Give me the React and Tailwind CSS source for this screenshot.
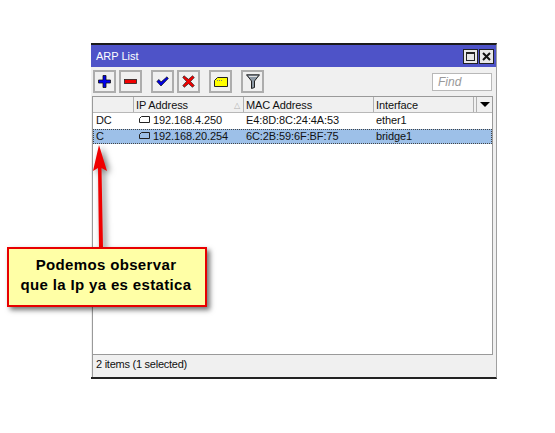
import React from "react";

const Btn = ({ children, className = "" }) => (
  <div className={`w-[23px] h-[23px] flex items-center justify-center bg-[#f0f0f0] border-2 border-[#adadad] ${className}`}>
    {children}
  </div>
);

const Row = ({ a, ip, mac, ifc, selected }) => (
  <div className={`flex h-[15px] items-center text-[11px] leading-[15px] tracking-[-0.1px] mb-px ${selected ? "bg-[#9dc0e8] outline-1 outline-dotted outline-[#444] -outline-offset-1" : "bg-white"}`}>
    <div className="w-[41px] pl-[3px]">{a}</div>
    <div className="w-[110px] pl-[5px] flex items-center gap-[3px]">
      <svg width="11" height="7" viewBox="0 0 11 7" className="-mt-[2px]">
        <path d="M0.5 6.5V2.5L2.5 0.5H10.5V6.5Z" fill="none" stroke="#222" strokeWidth="1" />
      </svg>
      <span>{ip}</span>
    </div>
    <div className="w-[130px] pl-[2px]">{mac}</div>
    <div className="w-[100px] pl-[2px]">{ifc}</div>
  </div>
);

export default function App() {
  return (
    <div className="relative w-[555px] h-[433px] bg-white overflow-hidden pt-[43px] pl-[91px] text-[#111]" style={{ fontFamily: '"Liberation Sans", Arial, sans-serif' }}>
      <div className="w-[406px] h-[336px] flex flex-col bg-[#f0f0f0] border-t-2 border-t-[#1a1a1a] border-b-2 border-b-[#222] border-r border-r-[#a0a0a0]">
        <div className="h-[22px] shrink-0 bg-[#4e53c8] flex items-center justify-between pl-[5px] pr-[2px]">
          <span className="text-[11px] text-white pt-px">ARP List</span>
          <div className="flex gap-px">
            <div className="w-[15px] h-[15px] bg-[#e8e8e8] border border-[#222] flex items-center justify-center">
              <div className="w-[9px] h-[9px] border border-[#222] border-t-2" />
            </div>
            <div className="w-[15px] h-[15px] bg-[#e8e8e8] border border-[#222] flex items-center justify-center">
              <svg width="9" height="9" viewBox="0 0 9 9"><path d="M1 1L8 8M8 1L1 8" stroke="#111" strokeWidth="2" /></svg>
            </div>
          </div>
        </div>

        <div className="h-[29px] shrink-0 flex items-center pl-[2px] pr-[4px]">
          <Btn>
            <svg width="13" height="13" viewBox="0 0 13 13"><path d="M5 0.5H8V5H12.5V8H8V12.5H5V8H0.5V5H5Z" fill="#0000f0" stroke="#111" strokeWidth="0.8" /></svg>
          </Btn>
          <Btn className="ml-[3px]">
            <svg width="13" height="5" viewBox="0 0 13 5"><rect x="0.5" y="0.5" width="12" height="4" fill="#f00000" stroke="#222" strokeWidth="0.8" /></svg>
          </Btn>
          <Btn className="ml-[9px]">
            <svg width="13" height="11" viewBox="0 0 13 11"><path d="M0.8 5.5L3 3.5L5 6L11 0.8L12.3 2.5L5 10Z" fill="#0000e0" stroke="#111" strokeWidth="0.7" /></svg>
          </Btn>
          <Btn className="ml-[3px]">
            <svg width="13" height="13" viewBox="0 0 13 13"><path d="M2 0.8L6.5 4.3L10.5 0.8L12.3 2.5L8.5 6.5L12.3 10.5L10.5 12.3L6.5 8.7L2.3 12.3L0.8 10.5L4.5 6.5L0.8 2.5Z" fill="#f00000" stroke="#222" strokeWidth="0.7" /></svg>
          </Btn>
          <Btn className="ml-[9px]">
            <svg width="14" height="10" viewBox="0 0 14 10"><path d="M0.5 9.5V3.5L3.5 0.5H13.5V9.5Z" fill="#ffff00" stroke="#222" strokeWidth="1" /><path d="M3 3.5H8" stroke="#777" strokeWidth="1" strokeDasharray="1 1" /></svg>
          </Btn>
          <Btn className="ml-[9px]">
            <svg width="14" height="15" viewBox="0 0 14 15"><path d="M0.5 0.8H13.5L8.5 7V13.5L5.5 14.5V7Z" fill="#8c98a4" stroke="#222" strokeWidth="1" /><path d="M3 2.5H11" stroke="#e0e0e0" strokeWidth="1" /></svg>
          </Btn>
          <div className="ml-auto w-[60px] h-[18px] bg-white border border-[#b8b8b8] pl-[5px] text-[12px] leading-[16px] italic text-[#9a9a9a]">Find</div>
        </div>

        <div className="ml-px mr-[3px] h-[259px] shrink-0 bg-white border border-[#9a9a9a] flex flex-col">
          <div className="flex h-[16px] shrink-0 bg-[#f0f0f0] border-b border-[#b8b8b8] text-[11px] leading-[16px] tracking-[-0.1px]">
            <div className="w-[41px] border-r border-[#b0b0b0]" />
            <div className="w-[110px] pl-[2px] border-r border-[#b0b0b0] flex justify-between pr-[3px]">
              <span>IP Address</span>
              <span className="text-[#b0b0b0] text-[8px] mt-[1px]">△</span>
            </div>
            <div className="w-[130px] pl-[2px] border-r border-[#b0b0b0]">MAC Address</div>
            <div className="w-[100px] pl-[2px] border-r border-[#b0b0b0]">Interface</div>
            <div className="w-[3px] border-r border-[#b0b0b0]" />
            <div className="flex-1 flex items-center justify-center">
              <div className="w-0 h-0 border-x-[5px] border-x-transparent border-t-[5px] border-t-black" />
            </div>
          </div>
          <Row a="DC" ip="192.168.4.250" mac="E4:8D:8C:24:4A:53" ifc="ether1" />
          <Row a="C" ip="192.168.20.254" mac="6C:2B:59:6F:BF:75" ifc="bridge1" selected />
        </div>

        <div className="flex-1 ml-px flex items-center pl-[3px] pb-[4px] text-[11px] tracking-[-0.25px] border-l border-[#9a9a9a]">2 items (1 selected)</div>
      </div>

      <svg className="absolute left-[85px] top-[140px] drop-shadow-[3px_2px_3px_rgba(0,0,0,0.55)]" width="40" height="115" viewBox="0 0 40 115">
        <path d="M14 5L22 31L16.5 28L18 108H14L13 28L8 31Z" fill="#f00000" />
      </svg>

      <div className="absolute left-[7px] top-[247px] w-[200px] h-[60px] pb-[4px] pr-[2px] bg-[#ffffa6] border-2 border-[#e80000] shadow-[3px_3px_5px_rgba(0,0,0,0.55)] flex flex-col items-center justify-center font-bold text-[15px] leading-[20px] tracking-[0.35px] text-black">
        <span>Podemos observar</span>
        <span>que la Ip ya es estatica</span>
      </div>
    </div>
  );
}
